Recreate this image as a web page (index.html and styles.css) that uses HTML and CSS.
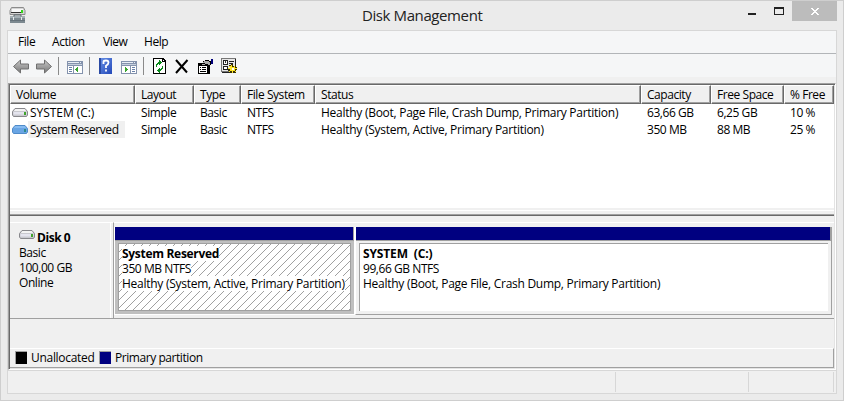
FILE: index.html
```html
<!DOCTYPE html>
<html lang="en">
<head>
<meta charset="utf-8">
<title>Disk Management</title>
<link rel="stylesheet" href="styles.css">
</head>
<body>
<svg width="0" height="0" class="defs" aria-hidden="true">
  <defs>
    <linearGradient id="steel" x1="0" y1="0" x2="0" y2="1"><stop offset="0" stop-color="#c9c9c9"/><stop offset="1" stop-color="#777"/></linearGradient>
    <linearGradient id="blue" x1="0" y1="0" x2="1" y2="1"><stop offset="0" stop-color="#6a93e8"/><stop offset="1" stop-color="#2348b8"/></linearGradient>
    <symbol id="drive" viewBox="0 0 16 9">
      <path d="M3 .5h10l2.500 3v3.500l-1 1.500h-13L.5 7V3.500z" fill="#c9c9cf" stroke="#88888c"/>
      <path d="M3.400 1h9.200l1.600 2H1.800z" fill="#f3f3f3"/>
      <path d="M1.500 4h13v2.500h-13z" fill="#e4e4ee"/>
      <path d="M12 4h2v3h-2z" fill="#3fa32c"/>
    </symbol>
    <symbol id="drive-blue" viewBox="0 0 16 9">
      <path d="M3 .5h10l2.500 3v3.500l-1 1.500h-13L.5 7V3.500z" fill="#69a5e4" stroke="#4f8bc9"/>
      <path d="M3.400 1h9.200l1.600 2H1.800z" fill="#86bbf1"/>
      <path d="M12 4h2v3h-2z" fill="#2d8a8c"/>
    </symbol>
  </defs>
</svg>
<div class="window">
  <header class="titlebar">
    <svg class="app-icon" width="17" height="17" viewBox="0 0 17 17">
      <path d="M2.500.5h12l1.500 3v4h-15v-4z" fill="#d4d4d4" stroke="#8c8c8c"/>
      <path d="M3 2h11v3H3z" fill="#f8f8f8"/><path d="M2 5.500h11" stroke="#333"/><path d="M12 3h2v3h-2z" fill="#35d71c"/>
      <path d="M1 9h15v7H1z" fill="#7d8990"/><path d="M1 9h15v2H1z" fill="#a5b0b5"/><path d="M5 9.500V8h7v1.500" fill="none" stroke="#59656b"/>
      <path d="M4 10h1v3H4zM12 10h1v3h-1z" fill="#e5eaec"/><path d="M1 13.500h15" stroke="#66727a"/>
    </svg>
    <h1 class="title">Disk Management</h1>
    <div class="controls">
      <svg class="min" width="8" height="2"><path d="M0 0h8v2H0z" fill="#222"/></svg>
      <svg class="max" width="10" height="8" shape-rendering="crispEdges"><path d="M0 0h10v8H0zM1 2v5h8V2z" fill="#222" fill-rule="evenodd"/></svg>
      <div class="close"><svg width="8" height="7" shape-rendering="crispEdges"><path d="M0 0h2v1h1v1h2V1h1V0h2v1H7v1H6v1H5v1h1v1h1v1h1v1H6V6H5V5H3v1H2v1H0V6h1V5h1V4h1V3H2V2H1V1H0z" fill="#fff"/></svg></div>
    </div>
  </header>
  <main class="frame">
    <nav class="menu">
      <span class="m-file">File</span><span class="m-action">Action</span><span class="m-view">View</span><span class="m-help">Help</span>
    </nav>
    <div class="toolbar">
      <svg width="209" height="20" viewBox="12 56 209 20">
        <path d="M13.500 66.500l7-6.500v4h8v5h-8v4z" fill="url(#steel)" stroke="#707070"/>
        <path d="M51.500 66.500l-7-6.500v4h-8v5h8v4z" fill="url(#steel)" stroke="#707070"/>
        <g shape-rendering="crispEdges">
          <path d="M58 57h1v18h-1zM89 57h1v18h-1zM143 57h1v18h-1z" fill="#8a8a8a"/>
          <g id="console">
            <path d="M67 61h16v13H67z" fill="#8493ad"/><path d="M68 62h14v1H68z" fill="#e9eef5"/><path d="M79 62h1v1h-1zM81 62h1v1h-1z" fill="#8493ad"/>
            <path d="M68 64h14v1H68z" fill="#c5cfdd"/>
          </g>
          <path d="M68 66h5v7h-5zM74 66h8v7h-8z" fill="#fff"/><path d="M69 67h3v1h-3zM69 69h3v1h-3zM69 71h3v1h-3z" fill="#6880a8"/>
          <path d="M75 69h1v-1h1v-1h1v5h-1v-1h-1v-1h-1z" fill="#39a52e"/>
          <use href="#console" x="54"/>
          <path d="M122 66h8v7h-8zM131 66h5v7h-5z" fill="#fff"/><path d="M132 67h3v1h-3zM132 69h3v1h-3zM132 71h3v1h-3z" fill="#6880a8"/>
          <path d="M125 67h1v1h1v1h1v1h-1v1h-1v1h-1z" fill="#39a52e"/>
        </g>
        <path d="M99 58h13v16H99z" fill="url(#blue)"/><path d="M99 58h2v16h-2z" fill="#2a4aa4"/>
        <path d="M103.500 64v-2q0-1.500 2.500-1.500t2.500 2-2.500 3.200V68M106 69.500v2" fill="none" stroke="#fff" stroke-width="1.800"/>
        <g shape-rendering="crispEdges">
          <path d="M153 58h10l3 3v13h-13z" fill="#000"/><path d="M154 59h8v3h3v11h-11z" fill="#fff"/><path d="M163 60h1v1h-1z" fill="#fff"/>
          <path d="M156 64h1v-1h1v-1h1v-2h1v1h1v1h1v1h-1v1h-1v1h-1v-1h-1v1h-1v2h-1zM163 66v3h-1v1h-1v1h-1v2h-1v-1h-1v-1h-1v-1h1v-1h1v-1h1v1h1v-1h1v-2z" fill="#08891a"/>
        </g>
        <path d="M176 60l11 12.500M187.500 60L176 73" fill="none" stroke="#000" stroke-width="2"/>
        <g shape-rendering="crispEdges">
          <path d="M198 63h5v-2h2v-1h4v1h2v4h-1v9h-12z" fill="#000"/><path d="M199 66h8v7h-8z" fill="#fff"/>
          <path d="M200 67h1v1h-1zM202 67h4v1h-4zM200 69h1v1h-1zM202 69h4v1h-4zM200 71h6v1h-6z" fill="#000"/>
          <path d="M204 61h5v1h1v3h-2v-1h-3v1h-3v-1h3v-1h-2v-1h1z" fill="#ababab"/><path d="M211 59h2v5h-2z" fill="#00007b"/>
        </g>
      </svg>
      <svg class="settings" width="16" height="16" shape-rendering="crispEdges">
        <path d="M0 0h15v14H0z" fill="#777"/><path d="M1 1h13v12H1z" fill="#e7e7e7"/><path d="M14 1h1v14H1v-1h13z" fill="#222"/>
        <path d="M2 2h5v5H2zM2 8h5v4H2zM8 3h5v1H8zM8 5h4v1H8z" fill="#222"/><path d="M3 3h3v3H3zM3 9h3v2H3z" fill="#fff"/><path d="M4 3h1v2H4z" fill="#333"/>
        <path d="M10 6h2v2h2V7h1v2h1v3h-1v3h-2v-1h-2v1H9v-2H7v-2h2V9H8V7h2z" fill="#393100"/>
        <path d="M10 7h1v2h2V8h1v2h2v1h-2v2h1v1h-1v-1h-2v2h-1v-2H9v1H8v-1h1v-2H7v-1h2V9H8V8h2z" fill="#ffe527"/><path d="M11 10h2v2h-2z" fill="#fff"/>
      </svg>
    </div>
    <section class="console">
      <table class="volumes">
        <colgroup><col class="c1"><col class="c2"><col class="c3"><col class="c4"><col class="c5"><col class="c6"><col class="c7"><col class="c8"></colgroup>
        <thead><tr><th>Volume</th><th>Layout</th><th>Type</th><th>File System</th><th>Status</th><th>Capacity</th><th>Free Space</th><th>% Free</th></tr></thead>
        <tbody>
          <tr><td><div class="vol"><svg width="16" height="9"><use href="#drive"/></svg><span class="wide">SYSTEM (C:)</span></div></td><td>Simple</td><td>Basic</td><td>NTFS</td><td class="health">Healthy (Boot, Page File, Crash Dump, Primary Partition)</td><td>63,66 GB</td><td>6,25 GB</td><td>10 %</td></tr>
          <tr><td><div class="vol"><svg width="16" height="9"><use href="#drive-blue"/></svg><span class="selected">System Reserved</span></div></td><td>Simple</td><td>Basic</td><td>NTFS</td><td class="health">Healthy (System, Active, Primary Partition)</td><td>350 MB</td><td>88 MB</td><td>25 %</td></tr>
        </tbody>
      </table>
      <div class="splitter"></div>
      <div class="disk">
        <div class="disk-info">
          <div class="disk-name"><svg width="16" height="9"><use href="#drive"/></svg><b>Disk 0</b></div>
          <div>Basic</div><div>100,00 GB</div><div>Online</div>
        </div>
        <div class="partitions">
          <article class="part active">
            <div class="bar"></div>
            <div class="body"><div class="inner">
              <svg class="hatch" width="232" height="67" shape-rendering="crispEdges"><defs><pattern id="lines" width="8" height="8" patternUnits="userSpaceOnUse"><path d="M7 0h1v1H7zM6 1h1v1H6zM5 2h1v1H5zM4 3h1v1H4zM3 4h1v1H3zM2 5h1v1H2zM1 6h1v1H1zM0 7h1v1H0z" fill="#a0a0a0"/></pattern></defs><rect width="232" height="67" fill="url(#lines)"/></svg>
              <p><b>System Reserved</b></p><p><span>350 MB NTFS</span></p><p><span class="health">Healthy (System, Active, Primary Partition)</span></p>
            </div></div>
          </article>
          <article class="part">
            <div class="bar"></div>
            <div class="body"><div class="inner">
              <p><b class="label">SYSTEM&nbsp; (C:)</b></p><p><span>99,66 GB NTFS</span></p><p><span class="health">Healthy (Boot, Page File, Crash Dump, Primary Partition)</span></p>
            </div></div>
          </article>
        </div>
      </div>
      <div class="blank"></div>
      <div class="legend"><i class="swatch black"></i><span class="l1">Unallocated</span><i class="swatch navy"></i><span>Primary partition</span></div>
    </section>
    <footer class="status"><div class="s1"></div><div class="s2"></div><div class="s3"></div></footer>
  </main>
</div>
</body>
</html>
```
FILE: styles.css
```css
* { box-sizing: border-box; }
body { margin: 0; width: 844px; height: 401px; overflow: hidden; font: 12px/15px "Open Sans", "Noto Sans", sans-serif; letter-spacing: -0.44px; color: #000; }
p, h1 { margin: 0; }
svg { display: block; flex: none; }
.defs { position: absolute; }
.window { width: 844px; height: 401px; background: #ebebeb; border: 1px solid #cecece; padding: 0 6px 6px; }
.titlebar { height: 29px; display: flex; position: relative; }
.app-icon { margin: 6px 0 0 2px; }
.title { position: absolute; left: 355px; top: 3px; font-size: 15px; line-height: 22px; font-weight: 400; letter-spacing: -0.4px; white-space: nowrap; color: #222; }
.controls { margin-left: auto; display: flex; }
.min { margin: 12px 18px 0 0; }
.max { margin: 6px 8px 0 0; }
.close { width: 45px; height: 20px; background: #bcbcbc; display: flex; justify-content: center; padding-top: 7px; }
.frame { width: 830px; height: 364px; border: 1px solid #d7d7d7; background: #f0f0f0; display: flex; flex-direction: column; }
.menu { height: 23px; background: #f5f6f7; border-bottom: 1px solid #b2b5b8; padding: 3px 0 0 10px; display: flex; }
.m-file { width: 34px; }
.m-action { width: 51px; }
.m-view { width: 41px; }
.toolbar { height: 23px; background: #f5f6f7; padding: 2px 0 0 4px; display: flex; }
.settings { margin-top: 2px; }
.health { letter-spacing: -0.27px; }
.wide { letter-spacing: -0.05px; }
.console { height: 287px; margin-top: 6px; border: 1px solid; border-color: #a0a0a0 #fff #fff #a0a0a0; display: flex; flex-direction: column; box-shadow: inset 1px 1px #696969, inset -1px -1px #e3e3e3; padding: 1px; }
.volumes { table-layout: fixed; width: 824px; border-collapse: separate; border-spacing: 0; white-space: nowrap; align-self: stretch; background: #fff; }
.c1 { width: 125px; } .c2 { width: 59px; } .c3 { width: 47px; } .c4 { width: 74px; } .c5 { width: 326px; } .c6 { width: 70px; } .c7 { width: 73px; } .c8 { width: 50px; }
.volumes th { height: 19px; padding: 0 0 0 5px; text-align: left; font-weight: 400; background: #f0f0f0; border: 1px solid; border-color: #fff #696969 #696969 #fff; box-shadow: inset -1px -1px #a0a0a0; }
.volumes td { height: 17px; padding: 0 0 0 6px; line-height: 17px; }
.volumes td:first-child { padding-left: 2px; }
.vol { display: flex; align-items: center; height: 17px; }
.vol span { padding: 0 6px 0 2px; }
.selected { background: #f0f0f0; }
.splitter { flex: none; height: 78px; background: #fff; border-bottom: 1px solid #696969; box-shadow: inset 0 -1px #a0a0a0, inset 0 -4px #f0f0f0, inset 0 -5px #fff, inset 0 -7px #f0f0f0; }
.disk { height: 97px; margin-top: 6px; display: flex; border-bottom: 1px solid #a0a0a0; }
.disk-info { width: 104px; padding: 7px 0 0 9px; border-top: 1px solid #fff; border-right: 1px solid #a0a0a0; box-shadow: inset -2px 0 #f0f0f0, inset -3px 0 #fff; }
.disk-name { display: flex; }
.disk-name b { margin-left: 2px; }
.partitions { flex: 1; display: flex; border-top: 1px solid #fff; padding: 4px 2px 3px 0; }
.part { width: 241px; border: 1px solid #fff; border-top: 0; display: flex; flex-direction: column; }
.part + .part { flex: 1; border-right-color: #a0a0a0; border-bottom-color: #a0a0a0; }
.bar { height: 14px; background: #000080; border-right: 1px solid #a0a0a0; border-bottom: 1px solid #a0a0a0; }
.body { flex: 1; padding: 2px 3px 3px; }
.active .body { background: #bfbfbf; }
.inner { position: relative; height: 100%; background: #fff; border: 1px solid #a0a0a0; padding: 2px 3px; white-space: nowrap; }
.part + .part .inner { border-right: 0; border-bottom: 0; }
.hatch { position: absolute; left: 0; top: 0; }
.inner p { position: relative; height: 15px; }
.inner p > * { display: inline-block; line-height: 15px; vertical-align: top; background: #fff; }
.inner b { letter-spacing: -0.3px; }
.inner .label { letter-spacing: -0.15px; }
.blank { flex: 1; }
.legend { height: 20px; border: solid; border-width: 1px 1px 1px 0; border-color: #fff #a0a0a0 #a0a0a0; padding: 2px 0 0 5px; display: flex; line-height: 13px; }
.swatch { width: 12px; height: 13px; margin-right: 4px; border: solid #a0a0a0; border-width: 1px 0 0 1px; }
.l1 { width: 68px; letter-spacing: -0.3px; }
.black { background: #000; }
.navy { background: #000080; }
.status { height: 23px; border-top: 1px solid #d7d7d7; padding: 1px 2px 1px; display: flex; }
.status div { border-right: 1px solid #d7d7d7; }
.s1 { width: 606px; } .s2 { width: 133px; } .s3 { width: 85px; }
```
